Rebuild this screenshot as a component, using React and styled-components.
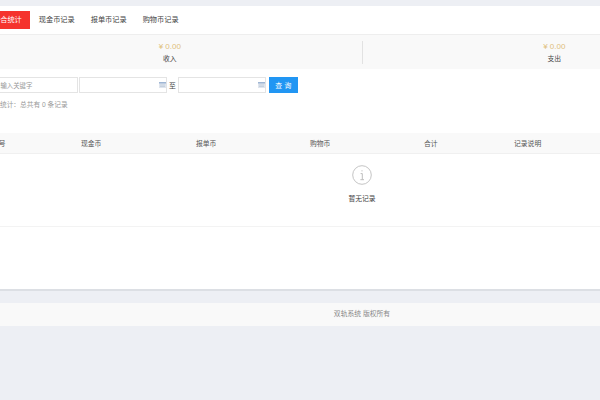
import React from "react";
import styled, { createGlobalStyle } from "styled-components";

const Global = createGlobalStyle`
  html, body { margin: 0; padding: 0; background: #edeff4; overflow: hidden; }
  body { width: 600px; height: 400px; font-family: "Liberation Sans", "Noto Sans CJK SC", sans-serif; font-size: 7.2px; color: #555; }
`;
const Page = styled.div`width: 768px; margin-left: -22px; padding-top: 6px;`;
const Panel = styled.div`background: #fff; height: 283px; border-bottom: 2px solid #dcdfe4;`;
const Tabs = styled.div`display: flex; align-items: center; height: 28px; padding-left: 7px; border-bottom: 1px solid #eeeeee;`;
const Tab = styled.div`
  height: 18px; line-height: 18px; padding: 0 8px; white-space: nowrap;
  margin-right: ${p => (p.$active ? "1px" : "0")};
  color: ${p => (p.$active ? "#fff" : "#444")};
  background: ${p => (p.$active ? "#f5332d" : "transparent")};
`;
const Stats = styled.div`display: flex; align-items: center; height: 34px; background: #f9f9f9;`;
const Stat = styled.div`
  flex: 1; height: 23px; text-align: center;
  & + & { border-left: 1px solid #e2e2e2; }
`;
const Amount = styled.div`color: #dfc07c; font-size: 8px; line-height: 11px;`;
const StatLabel = styled.div`color: #444; font-size: 6.8px; line-height: 12px; margin-top: 1px;`;
const Filter = styled.div`display: flex; align-items: center; height: 16px; margin: 8px 0 0 8px;`;
const Field = styled.div`
  box-sizing: border-box; display: flex; align-items: center; justify-content: space-between;
  width: ${p => p.$w}px; height: 16px; padding: 0 0 0 7px; margin-right: ${p => p.$mr || 0}px;
  background: #fff; border: 1px solid #e4e4e4; color: #999; font-size: 6.4px;
`;
const To = styled.span`width: 11px; text-align: center; color: #444; font-size: 6.8px;`;
const Search = styled.button`
  box-sizing: border-box; width: 29px; height: 16px; margin-left: 3px; padding: 0 0 0 2px; border: 0;
  background: #2196f3; color: #fff; font: inherit; font-size: 6.8px; letter-spacing: 2.4px;
`;
const Summary = styled.div`margin: 6px 0 0 22px; line-height: 11px; color: #999; height: 34px; font-size: 6.7px;`;
const Head = styled.div`
  display: grid; grid-template-columns: 89px 115px 114px 114px 90px 1fr; align-items: center;
  height: 20px; padding-left: 14px; background: #f9f9f9; border-bottom: 1px solid #f0f0f0; color: #555; font-size: 6.8px;
`;
const Empty = styled.div`
  display: flex; flex-direction: column; align-items: center; height: 72px; border-bottom: 1px solid #f3f3f3;
`;
const EmptyIcon = styled.svg`width: 20px; height: 20px; margin-top: 11px; display: block;`;
const EmptyText = styled.div`margin-top: 8px; color: #444; line-height: 11px; font-size: 6.8px;`;
const Footer = styled.div`
  height: 23px; margin-top: 12px; background: #f9f9f9; color: #888; text-align: center; line-height: 22px; font-size: 6.8px;
`;

const Cal = () => (
  <svg width="7" height="6" viewBox="0 0 7 6">
    <rect width="7" height="6" fill="#dfe5ee" />
    <rect width="7" height="1.5" fill="#9fb6d4" />
    <path d="M1 3h5M1 4.5h5" stroke="#b5c2d4" strokeWidth=".6" />
  </svg>
);

export default function App() {
  return (
    <Page>
      <Global />
      <Panel>
        <Tabs>
          <Tab $active>综合统计</Tab>
          <Tab>现金币记录</Tab>
          <Tab>报单币记录</Tab>
          <Tab>购物币记录</Tab>
        </Tabs>
        <Stats>
          <Stat><Amount>¥ 0.00</Amount><StatLabel>收入</StatLabel></Stat>
          <Stat><Amount>¥ 0.00</Amount><StatLabel>支出</StatLabel></Stat>
        </Stats>
        <Filter>
          <Field $w={92} $mr={1}>请输入关键字</Field>
          <Field $w={88}><span /><Cal /></Field>
          <To>至</To>
          <Field $w={88}><span /><Cal /></Field>
          <Search>查询</Search>
        </Filter>
        <Summary>统计：总共有 0 条记录</Summary>
        <Head>
          <span>序号</span><span>现金币</span><span>报单币</span><span>购物币</span><span>合计</span><span>记录说明</span>
        </Head>
        <Empty>
          <EmptyIcon viewBox="0 0 20 20" fill="none" stroke="#b5b5b5">
            <circle cx="10" cy="10" r="9.3" strokeWidth=".8" />
            <path d="M8.6 8.6H10.3V14.5M8.4 14.7H12" strokeWidth=".9" />
            <circle cx="10" cy="5.8" r=".6" fill="#b5b5b5" stroke="none" />
          </EmptyIcon>
          <EmptyText>暂无记录</EmptyText>
        </Empty>
      </Panel>
      <Footer>双轨系统 版权所有</Footer>
    </Page>
  );
}
